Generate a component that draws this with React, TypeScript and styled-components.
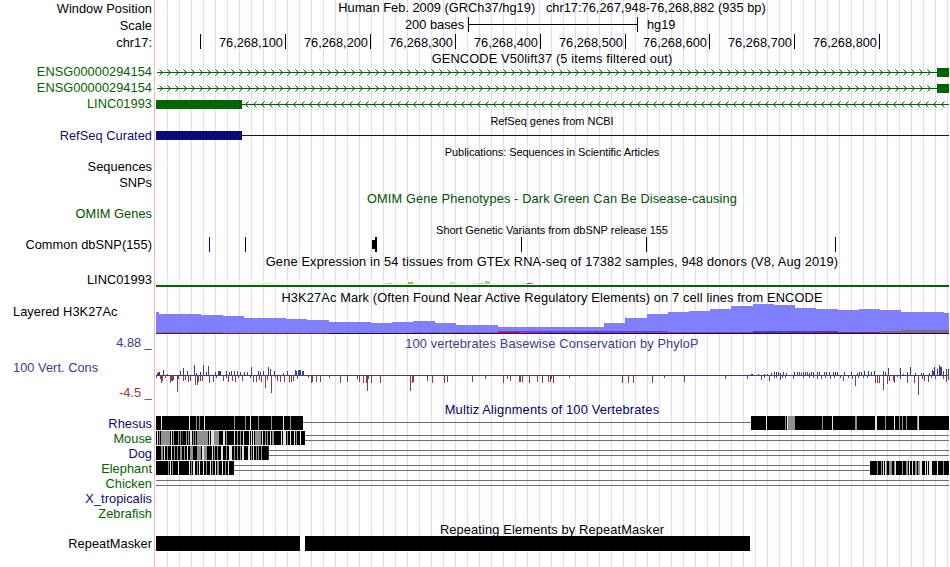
import React, { FC, ReactNode } from 'react';
import styled, { createGlobalStyle } from 'styled-components';

const GlobalStyle = createGlobalStyle`
  body {
    margin: 0;
    background: #fff;
  }
`;

const LEFT = 155;
const RIGHT = 949;

const Browser = styled.main`
  width: 949px;
  height: 567px;
  overflow: hidden;
  font-family: "Liberation Sans", Arial, sans-serif;
  font-size: 12.8px;
  color: #000;

  background-image:
    linear-gradient(#ffb4b4, #ffb4b4),
    repeating-linear-gradient(to right, #dcdcf8 0 1px, transparent 1px 12px);
  background-size: 1px 100%, 782px 100%;
  background-position: 154px 0, 167px 0;
  background-repeat: no-repeat;
`;

const TrackRow = styled.section<{ $height: number }>`
  display: grid;
  grid-template-columns: 155px 794px;
  height: ${(p) => p.$height}px;
`;

const Label = styled.div<{ $color?: string; $left?: boolean; $line?: number }>`
  padding: ${(p) => (p.$left ? '0 0 0 13px' : '0 3px 0 0')};
  text-align: ${(p) => (p.$left ? 'left' : 'right')};
  line-height: ${(p) => p.$line || 16}px;
  letter-spacing: 0.04px;
  color: ${(p) => p.$color || '#000'};
  white-space: pre;
`;

const Title = styled.h2<{ $color?: string; $small?: boolean; $line: number; $spacing?: number }>`
  margin: 0;
  font-weight: normal;
  font-size: ${(p) => (p.$small ? '11px' : 'inherit')};
  line-height: ${(p) => p.$line}px;
  letter-spacing: ${(p) => p.$spacing || 0}px;
  color: ${(p) => p.$color || '#000'};
  text-align: center;
  white-space: pre;
`;

const Drawing = styled.svg`
  display: block;
  width: 794px;
  height: 100%;
  overflow: visible;
`;

const ScaleBar = styled.div`
  display: flex;
  padding-left: 250px;
  line-height: 15px;
`;

const ScaleText = styled.span<{ $width: number }>`
  width: ${(p) => p.$width}px;
`;

const Bracket = styled.div`
  display: flex;
  align-items: center;
  width: 168px;
  height: 15px;
  margin-right: 9px;
  border: solid #000;
  border-width: 0 1px;

  &::before {
    content: '';
    flex: 1;
    height: 1px;
    background: #000;
  }
`;

const Ruler = styled.div`
  display: flex;
`;

const RulerCell = styled.span<{ $width: number }>`
  box-sizing: border-box;
  width: ${(p) => p.$width}px;
  height: 15px;
  padding-right: 2px;
  border-right: 1px solid #000;
  line-height: 17px;
  text-align: right;
`;

const AxisLabels = styled.div`
  display: flex;
  flex-direction: column;
  justify-content: space-between;
  height: 66px;
`;

const TitleBox = styled.div`
  height: 17px;
`;

const WiggleBox = styled.div`
  height: 50px;
`;

type TrackProps = {
  height: number;
  label?: string;
  color?: string;
  line?: number;
  left?: boolean;
  children?: ReactNode;
}

const Track: FC<TrackProps> = ({ height, label, color, line, left, children }) => (
  <TrackRow $height={height}>
    <Label $color={color} $line={line || height} $left={left}>{label}</Label>
    {children}
  </TrackRow>
);

type HeadingProps = {
  height: number;
  line: number;
  small?: boolean;
  spacing?: number;
  color?: string;
  children: ReactNode;
}

const Heading: FC<HeadingProps> = ({ height, line, small, spacing, color, children }) => (
  <TrackRow $height={height}>
    <span />
    <Title $line={line} $small={small} $spacing={spacing} $color={color}>{children}</Title>
  </TrackRow>
);

// Drawings keep the x coordinates of the whole window
const Plot: FC<{ height: number; children: ReactNode }> = ({ height, children }) => (
  <Drawing viewBox={`${LEFT} 0 ${RIGHT - LEFT} ${height}`} shapeRendering="crispEdges">
    {children}
  </Drawing>
);

const GREEN = '#006400';
const NAVY = '#0c0c78';

type GeneProps = {
  start: number;
  end: number;
  exon: [number, number];
  reverse?: boolean;
}

const Gene: FC<GeneProps> = ({ start, end, exon, reverse }) => {
  const tips: number[] = [];
  for (let x = reverse ? 245 : 162; x < end - 4; x += 8) {
    tips.push(x);
  }
  const arm = reverse ? 3 : -3;

  return (
    <Plot height={16}>
      <rect x={start} y={8} width={end - start} height={1} fill={GREEN} />
      <path
        d={tips.map((x) => `M${x + arm + 0.5} 5.5L${x + 0.5} 8.5L${x + arm + 0.5} 11.5`).join('')}
        fill="none"
        stroke={GREEN}
        strokeWidth={1}
        shapeRendering="auto"
      />
      <rect x={exon[0]} y={4} width={exon[1] - exon[0]} height={9} fill={GREEN} />
    </Plot>
  );
};

// [x, top] of each step, drawn down to the base line
const ACETYLATION = [
  [156, 8], [159, 10], [201, 11], [223, 12], [244, 14], [286, 15], [307, 16], [329, 18],
  [371, 19], [392, 18], [413, 17], [435, 19], [456, 21], [498, 23], [604, 19], [625, 13],
  [626, 14], [647, 10], [668, 8], [689, 7], [710, 5], [731, 2], [753, 0], [774, 1], [795, 4],
  [816, 5], [838, 6], [859, 5], [880, 6], [901, 8], [944, 9], [949, 9],
];

const Acetylation = () => (
  <Plot height={31}>
    {ACETYLATION.slice(0, -1).map(([x, top], i) => (
      <rect key={x} x={x} y={top} width={ACETYLATION[i + 1][0] - x} height={29 - top} fill="#8080ff" />
    ))}
    <rect x={156} y={28} width={67} height={1} fill="#7a6a9c" />
    <rect x={413} y={28} width={85} height={1} fill="#7060e0" />
    <rect x={498} y={27} width={170} height={2} fill="#6a3cff" />
    <rect x={498} y={28} width={21} height={1} fill="#a01060" />
    <rect x={668} y={28} width={85} height={1} fill="#6a3cff" />
    <rect x={753} y={27} width={85} height={2} fill="#5030e0" />
    <rect x={774} y={28} width={21} height={1} fill="#405090" />
    <rect x={816} y={28} width={64} height={1} fill="#70307c" />
    <rect x={880} y={27} width={21} height={2} fill="#80688c" />
    <rect x={901} y={26} width={48} height={3} fill="#80688c" />
    <rect x={156} y={29} width={793} height={1} fill="#2c0830" />
    <rect x={156} y={29} width={173} height={1} fill="#601860" />
    <rect x={498} y={29} width={42} height={1} fill="#800030" />
  </Plot>
);

// [x, score]: positive scores go up from the axis, negative ones down
const PHYLOP = [
  [156, -2], [157, 2], [158, 3], [159, 3], [160, -3], [161, -7], [162, -5], [163, 5], [165, -2],
  [167, 1], [170, -7], [171, -5], [172, -5], [173, -4], [177, -16], [178, -3], [180, 4],
  [183, 7], [183, -5], [185, -4], [187, 4], [188, -6], [190, -5], [194, 10], [195, -9],
  [196, 2], [197, -9], [198, -6], [200, 3], [200, -5], [202, -5], [203, 10], [206, 3], [208, 9],
  [209, -7], [213, -6], [215, 3], [216, -2], [218, 4], [219, 4], [220, 4], [223, -5], [226, 4],
  [226, -2], [228, -6], [229, 3], [231, 4], [232, -5], [234, 4], [235, -6], [237, 4], [238, -2],
  [240, 3], [242, -5], [244, 3], [247, 3], [250, -2], [251, 8], [253, -6], [256, -6], [258, 4],
  [259, -4], [260, 3], [261, -6], [263, 4], [265, -12], [267, -4], [268, 8], [270, 6],
  [271, -17], [274, 4], [275, -2], [277, -5], [280, -6], [283, 2], [284, -6], [287, 4],
  [289, -6], [291, -6], [293, -5], [295, 5], [296, 4], [297, -3], [298, 5], [299, 5], [300, 5],
  [302, 4], [303, 4], [308, -2], [311, -7], [312, -6], [316, -6], [320, -6], [329, -2],
  [340, -7], [347, -6], [357, -3], [359, -6], [363, -7], [366, -7], [367, -15], [368, -3],
  [371, -7], [380, -7], [410, -15], [412, -7], [413, -6], [427, -5], [432, -7], [444, -7],
  [447, -6], [472, -6], [485, -3], [503, -7], [507, -3], [510, -5], [519, -6], [520, -6],
  [522, -6], [529, -7], [537, -6], [542, -7], [548, -6], [550, -6], [551, -3], [553, -7],
  [569, -2], [622, -7], [628, -7], [633, -7], [652, -7], [664, -2], [684, -6], [725, -3],
  [747, -3], [751, 1], [752, 1], [758, 1], [761, -4], [764, 1], [764, -2], [767, 1], [769, -5],
  [771, 2], [774, 3], [774, -2], [776, 3], [776, -2], [778, 3], [780, -4], [780, 2], [782, -2],
  [783, 3], [785, -2], [786, 2], [793, -3], [794, 3], [797, 3], [799, 3], [801, 2], [803, 3],
  [803, -2], [805, 3], [807, 3], [809, 2], [809, -2], [811, 3], [813, 3], [813, -2], [817, 3],
  [817, -3], [819, 3], [821, -3], [824, 3], [825, -2], [826, 3], [829, 3], [830, -3], [833, 3],
  [834, -2], [835, 3], [837, 3], [840, -2], [843, -5], [844, 3], [848, -2], [851, 3], [852, -3],
  [855, -10], [857, 2], [858, -2], [859, 3], [861, 3], [863, -2], [864, 4], [867, -2], [868, 4],
  [871, 3], [874, 4], [875, -7], [877, -7], [879, -7], [883, 4], [883, -14], [885, 3],
  [887, -8], [888, 7], [889, -5], [893, -5], [894, -7], [897, -1], [900, 7], [900, -3],
  [903, 1], [907, 3], [907, -7], [910, 8], [914, -7], [915, 2], [918, -19], [921, 2], [922, -3],
  [923, 2], [924, -5], [928, -6], [929, 2], [931, -2], [932, 5], [933, 4], [934, 8], [935, -3],
  [937, 6], [939, 10], [940, 8], [941, 8], [943, 4], [943, -3], [946, 6], [946, -6], [948, 6],
  [948, -4],
];

const Conservation = () => (
  <Plot height={50}>
    <rect x={156} y={23} width={793} height={1} fill="#3c3c8c" />
    {PHYLOP.map(([x, score]) => (
      <rect
        key={`${x}:${score}`}
        x={x}
        y={score > 0 ? 23 - score : 24}
        width={1}
        height={Math.abs(score)}
        fill={score > 0 ? '#3c3c8c' : '#8c3c3c'}
      />
    ))}
  </Plot>
);

type Block = {
  start: number;
  end: number;
  gaps: [number, number, string][];
}

const SHADES: Record<string, string> = { g: '#909090', w: '#e4e4e4', d: '#303030' };

type AlignmentProps = {
  blocks?: Block[];
  lines?: number[];
  from?: number;
}

const Alignment: FC<AlignmentProps> = ({ blocks = [], lines = [4, 9], from = 156 }) => (
  <Plot height={15}>
    {lines.map((y) => <rect key={y} x={from} y={y} width={RIGHT - from} height={1} fill="#6e6e6e" />)}
    {blocks.map(({ start, end, gaps }) => (
      <g key={start}>
        <rect x={start} width={end - start} height={14} fill="#000" />
        {gaps.map(([x, width, shade]) => (
          <rect key={x} x={x} width={width} height={14} fill={SHADES[shade]} />
        ))}
      </g>
    ))}
  </Plot>
);

const RHESUS: Block[] = [
  {
    start: 156, end: 303, gaps: [
      [161, 1, 'w'], [189, 1, 'w'], [196, 1, 'g'], [199, 1, 'g'], [204, 1, 'w'], [234, 1, 'g'],
      [245, 1, 'g'], [250, 1, 'w'], [258, 1, 'g'], [271, 1, 'g'], [283, 1, 'w'], [290, 1, 'g'],
    ],
  },
  {
    start: 751, end: 949, gaps: [
      [766, 1, 'w'], [785, 1, 'g'], [787, 1, 'w'], [788, 7, 'g'], [822, 1, 'g'], [832, 1, 'w'],
      [855, 2, 'g'], [875, 2, 'w'], [885, 1, 'g'], [894, 1, 'w'], [899, 1, 'g'], [902, 1, 'g'],
      [906, 1, 'g'], [917, 1, 'g'], [918, 1, 'w'],
    ],
  },
];

const MOUSE: Block[] = [{
  start: 156, end: 305, gaps: [
    [157, 1, 'w'], [159, 1, 'g'], [161, 9, 'g'], [171, 1, 'w'], [173, 1, 'g'], [178, 1, 'g'],
    [180, 1, 'g'], [182, 1, 'd'], [186, 1, 'g'], [188, 1, 'g'], [190, 2, 'w'], [193, 1, 'g'],
    [195, 1, 'g'], [197, 7, 'g'], [204, 4, 'g'], [209, 1, 'w'], [211, 3, 'w'], [214, 5, 'g'],
    [223, 2, 'w'], [226, 1, 'g'], [234, 1, 'w'], [237, 1, 'g'], [240, 1, 'g'], [243, 1, 'w'],
    [249, 1, 'w'], [251, 1, 'w'], [253, 1, 'w'], [255, 6, 'g'], [262, 1, 'w'], [265, 1, 'g'],
    [267, 1, 'g'], [270, 1, 'w'], [272, 2, 'g'], [281, 1, 'w'], [283, 3, 'w'], [287, 1, 'g'],
    [290, 1, 'w'], [294, 1, 'w'], [296, 1, 'g'], [300, 1, 'w'],
  ],
}];

const DOG: Block[] = [{
  start: 156, end: 269, gaps: [
    [161, 2, 'g'], [164, 1, 'w'], [167, 1, 'g'], [171, 1, 'w'], [174, 1, 'g'], [177, 1, 'g'],
    [180, 2, 'g'], [184, 1, 'g'], [187, 1, 'w'], [190, 3, 'g'], [197, 4, 'g'], [202, 2, 'w'],
    [204, 3, 'g'], [212, 1, 'w'], [214, 1, 'g'], [217, 1, 'g'], [221, 2, 'w'], [226, 1, 'g'],
    [229, 3, 'w'], [234, 1, 'g'], [237, 1, 'g'], [240, 1, 'g'], [242, 2, 'w'], [248, 2, 'w'],
    [251, 1, 'g'], [253, 1, 'w'], [256, 1, 'g'], [258, 1, 'g'], [261, 1, 'g'], [268, 1, 'd'],
  ],
}];

const ELEPHANT: Block[] = [
  {
    start: 156, end: 234, gaps: [
      [168, 1, 'g'], [170, 1, 'w'], [172, 1, 'g'], [178, 1, 'w'], [189, 1, 'w'], [191, 1, 'g'],
      [193, 2, 'w'], [197, 1, 'g'], [199, 1, 'w'], [203, 1, 'w'], [206, 1, 'g'], [210, 1, 'w'],
      [212, 1, 'g'], [215, 1, 'w'], [217, 2, 'g'], [222, 1, 'w'], [225, 1, 'g'], [228, 1, 'w'],
    ],
  },
  {
    start: 870, end: 949, gaps: [
      [877, 1, 'g'], [881, 1, 'g'], [883, 1, 'w'], [885, 1, 'w'], [886, 1, 'g'], [889, 3, 'g'],
      [894, 1, 'g'], [895, 1, 'w'], [902, 1, 'g'], [906, 2, 'g'], [909, 1, 'w'], [912, 1, 'w'],
      [915, 2, 'g'], [918, 2, 'g'], [920, 2, 'w'], [925, 1, 'w'], [927, 1, 'w'], [929, 1, 'w'],
      [930, 2, 'w'], [937, 1, 'w'], [943, 1, 'g'],
    ],
  },
];

const POSITIONS: [number, string][] = [
  [46, ''], [85, '76,268,100'], [85, '76,268,200'], [85, '76,268,300'], [85, '76,268,400'],
  [85, '76,268,500'], [84, '76,268,600'], [85, '76,268,700'], [85, '76,268,800'],
];

// x, width, height, colour of the tissues that stand above the base line
const TISSUES: [number, number, number, string][] = [
  [261, 5, 1, '#eeee44'], [387, 5, 1, '#cdb79e'], [408, 5, 2, '#9acd32'], [450, 5, 2, '#b4eeb4'],
  [478, 5, 1, '#cdb79e'], [485, 5, 3, '#cdb79e'], [527, 5, 1, '#ff00ff'],
];

const App = () => (
  <>
    <GlobalStyle />
    <Browser>
      <Track height={17} label="Window Position">
        <Title $line={16} $spacing={0.02}>
          {'Human Feb. 2009 (GRCh37/hg19)   chr17:76,267,948-76,268,882 (935 bp)'}
        </Title>
      </Track>
      <Track height={17} label="Scale">
        <ScaleBar>
          <ScaleText $width={63}>200 bases</ScaleText>
          <Bracket />
          <span>hg19</span>
        </ScaleBar>
      </Track>
      <Track height={17} label="chr17:">
        <Ruler>
          {POSITIONS.map(([width, text]) => <RulerCell key={text} $width={width}>{text}</RulerCell>)}
        </Ruler>
      </Track>

      <Heading height={13} line={15} spacing={0.15}>GENCODE V50lift37 (5 items filtered out)</Heading>
      <Track height={16} label="ENSG00000294154" color={GREEN}>
        <Gene start={157} end={937} exon={[937, 949]} />
      </Track>
      <Track height={16} label="ENSG00000294154" color={GREEN}>
        <Gene start={157} end={937} exon={[937, 949]} />
      </Track>
      <Track height={16} label="LINC01993" color={GREEN}>
        <Gene start={242} end={949} exon={[156, 242]} reverse />
      </Track>

      <Heading height={16} line={18} small spacing={-0.04}>RefSeq genes from NCBI</Heading>
      <Track height={15} label="RefSeq Curated" color={NAVY}>
        <Plot height={15}>
          <rect x={156} y={3} width={86} height={9} fill={NAVY} />
          <rect x={242} y={7} width={707} height={1} fill={NAVY} />
        </Plot>
      </Track>

      <Heading height={16} line={18} small spacing={-0.07}>Publications: Sequences in Scientific Articles</Heading>
      <Track height={16} line={15} label="Sequences" />
      <Track height={15} label="SNPs" />

      <Heading height={16} line={18} spacing={0.13} color="#005000">
        OMIM Gene Phenotypes - Dark Green Can Be Disease-causing
      </Heading>
      <Track height={15} label="OMIM Genes" color="#005000" />

      <Heading height={16} line={18} small spacing={-0.03}>Short Genetic Variants from dbSNP release 155</Heading>
      <Track height={15} label="Common dbSNP(155)">
        <Plot height={15}>
          <rect x={209} width={1} height={15} fill="#0000c8" />
          <rect x={372} y={3} width={3} height={9} />
          <rect x={375} width={2} height={15} />
          {[245, 521, 646, 835].map((x) => <rect key={x} x={x} width={1} height={15} />)}
        </Plot>
      </Track>

      <Heading height={18} line={19} spacing={0.155}>
        Gene Expression in 54 tissues from GTEx RNA-seq of 17382 samples, 948 donors (V8, Aug 2019)
      </Heading>
      <Track height={19} label="LINC01993">
        <Plot height={19}>
          <rect x={156} y={11} width={378} height={1} fill="#f4f4f4" />
          <rect x={156} y={12} width={378} height={1} fill="#fff" />
          <rect x={156} y={13} width={378} height={1} fill="#e8e8e8" />
          {TISSUES.map(([x, width, height, color]) => (
            <rect key={x} x={x} y={14 - height} width={width} height={height} fill={color} />
          ))}
          <rect x={156} y={15} width={793} height={2} fill={GREEN} />
        </Plot>
      </Track>

      <Heading height={15} line={17} spacing={0.14}>
        H3K27Ac Mark (Often Found Near Active Regulatory Elements) on 7 cell lines from ENCODE
      </Heading>
      <Track height={31} line={15} label="Layered H3K27Ac" left>
        <Acetylation />
      </Track>

      <TrackRow $height={67}>
        <AxisLabels>
          <Label $color="#3c3c8c">4.88 _</Label>
          <Label $color="#3c3c8c" $left>100 Vert. Cons</Label>
          <Label $color="#8c3c3c">-4.5 _</Label>
        </AxisLabels>
        <div>
          <TitleBox>
            <Title $line={17} $spacing={0.13} $color="#3c3c8c">
              100 vertebrates Basewise Conservation by PhyloP
            </Title>
          </TitleBox>
          <WiggleBox>
            <Conservation />
          </WiggleBox>
        </div>
      </TrackRow>

      <Heading height={14} line={16} spacing={0.19} color="#000064">Multiz Alignments of 100 Vertebrates</Heading>
      <Track height={15} label="Rhesus" color={NAVY}>
        <Alignment blocks={RHESUS} lines={[6]} />
      </Track>
      <Track height={15} label="Mouse" color={GREEN}>
        <Alignment blocks={MOUSE} />
      </Track>
      <Track height={15} label="Dog" color={NAVY}>
        <Alignment blocks={DOG} />
      </Track>
      <Track height={15} label="Elephant" color={GREEN}>
        <Alignment blocks={ELEPHANT} />
      </Track>
      <Track height={15} label="Chicken" color={GREEN}>
        <Alignment />
      </Track>
      <Track height={15} label="X_tropicalis" color={NAVY} />
      <Track height={15} label="Zebrafish" color={GREEN} />

      <Heading height={15} line={18} spacing={0.15}>Repeating Elements by RepeatMasker</Heading>
      <Track height={15} label="RepeatMasker">
        <Plot height={15}>
          <rect x={156} width={144} height={15} />
          <rect x={305} width={445} height={15} />
        </Plot>
      </Track>
    </Browser>
  </>
);

export default App;
